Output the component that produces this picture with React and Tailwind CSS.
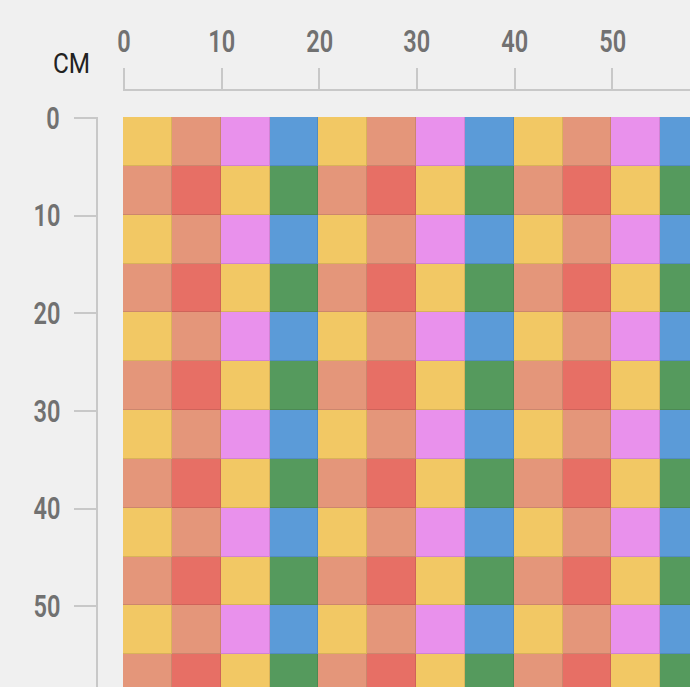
const rowA = ['bg-[#f2c864]', 'bg-[#e4967a]', 'bg-[#e991ec]', 'bg-[#5b9bd8]'];
const rowB = ['bg-[#e4967a]', 'bg-[#e76f65]', 'bg-[#f2c864]', 'bg-[#559a5d]'];

const labels = [0, 10, 20, 30, 40, 50];
const ticks = [0, 10, 20, 30, 40, 50, 60];

const font = { fontFamily: 'Roboto, "Noto Sans", sans-serif' };

function TopRuler() {
  return (
    <div className="flex h-[117px]">
      <div className="w-[123px] shrink-0 pt-[50px] pl-[53px]">
        <span className="block origin-left scale-x-[0.87] text-[28px] leading-none text-[#222]" style={font}>CM</span>
      </div>
      <div className="flex-1 min-w-0">
        <div className="flex ml-[-47.85px] pt-[26px] h-[68px]">
          {labels.map((n) => (
            <div key={n} className="w-[97.7px] shrink-0 flex justify-center">
              <span className="block scale-x-[0.76] text-[31px] leading-none font-semibold text-[#717171]" style={font}>
                {n}
              </span>
            </div>
          ))}
        </div>
        <div className="flex">
          {ticks.map((n) => (
            <div key={n} className="w-[97.7px] shrink-0 h-[21px] border-l-2 border-[#c8c8c8]" />
          ))}
        </div>
        <div className="h-[2px] bg-[#c8c8c8]" />
      </div>
    </div>
  );
}

function LeftRuler() {
  return (
    <div className="flex w-[123px] shrink-0">
      <div className="w-[60px] shrink-0 mt-[-47.85px]">
        {labels.map((n) => (
          <div key={n} className="h-[97.7px] flex items-center justify-end">
            <span className="block origin-right scale-x-[0.76] text-[31px] leading-none font-semibold text-[#717171]" style={font}>
              {n}
            </span>
          </div>
        ))}
      </div>
      <div className="ml-[14px] w-[24px] shrink-0 border-r-2 border-[#c8c8c8]">
        {ticks.map((n) => (
          <div key={n} className="h-[97.7px] border-t-2 border-[#c8c8c8]" />
        ))}
      </div>
    </div>
  );
}

function Grid() {
  const rows = Array.from({ length: 12 }, (_, r) => r);
  const cols = Array.from({ length: 12 }, (_, c) => c);
  return (
    <div className="grid grid-cols-[repeat(12,48.85px)] auto-rows-[48.85px]">
      {rows.map((r) =>
        cols.map((c) => {
          const palette = r % 2 === 0 ? rowA : rowB;
          return <div key={`${r}-${c}`} className={`${palette[c % 4]} border-r border-b border-black/10`} />;
        })
      )}
    </div>
  );
}

export default function App() {
  return (
    <div className="w-[690px] h-[687px] overflow-hidden bg-[#f0f0f0]">
      <TopRuler />
      <div className="flex">
        <LeftRuler />
        <Grid />
      </div>
    </div>
  );
}
